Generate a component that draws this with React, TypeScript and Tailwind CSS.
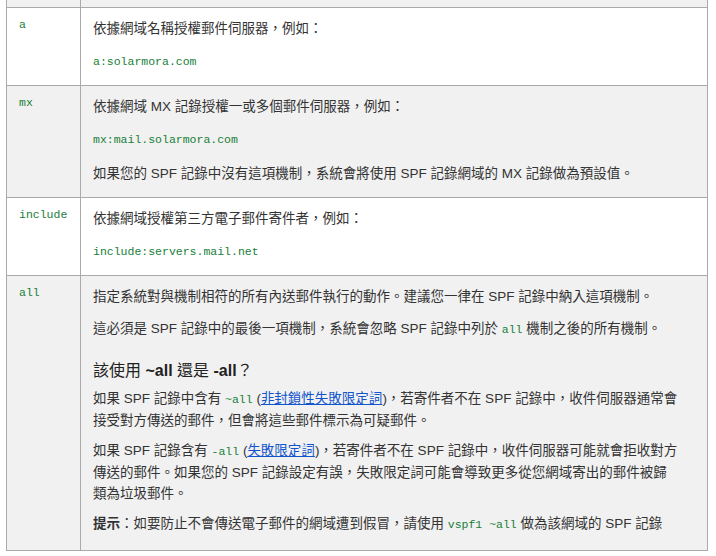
const body = { fontFamily: '"Liberation Sans", Arial, "Noto Sans CJK TC", sans-serif' };
const mono = { fontFamily: '"Liberation Mono", "Courier New", monospace' };

function Code({ children }: { children: React.ReactNode }) {
  return (
    <code style={mono} className="text-[11.5px] text-[#188038]">
      {children}
    </code>
  );
}

function Row({
  name,
  gray,
  children,
}: {
  name: string;
  gray?: boolean;
  children: React.ReactNode;
}) {
  return (
    <div className={`flex border-b border-[#aaa] ${gray ? "bg-[#f1f1f1]" : "bg-white"}`}>
      <div className="w-[74px] shrink-0 border-r border-[#aaa] pl-3 pt-[10px]">
        <span style={mono} className="block text-[11.5px] leading-[14px] text-[#188038]">
          {name}
        </span>
      </div>
      <div className="flex-1 pl-3 pr-3 pt-[10px] pb-[2px]">{children}</div>
    </div>
  );
}

function P({ children, mb = "mb-[11px]" }: { children: React.ReactNode; mb?: string }) {
  return <p className={`${mb} leading-[21px]`}>{children}</p>;
}

export default function App() {
  return (
    <div style={body} className="min-h-screen bg-white text-[13.5px] text-[#333]">
      <div className="ml-[6px] w-[702px] border-x border-[#aaa]">
        <div className="flex h-[8px] border-b border-[#aaa] bg-[#f1f1f1]">
          <div className="w-[74px] border-r border-[#aaa]" />
          <div className="flex-1" />
        </div>

        <Row name="a">
          <P>依據網域名稱授權郵件伺服器，例如：</P>
          <P>
            <Code>a:solarmora.com</Code>
          </P>
        </Row>

        <Row name="mx" gray>
          <P>依據網域 MX 記錄授權一或多個郵件伺服器，例如：</P>
          <P mb="mb-[13px]">
            <Code>mx:mail.solarmora.com</Code>
          </P>
          <P>如果您的 SPF 記錄中沒有這項機制，系統會將使用 SPF 記錄網域的 MX 記錄做為預設值。</P>
        </Row>

        <Row name="include">
          <P>依據網域授權第三方電子郵件寄件者，例如：</P>
          <P>
            <Code>include:servers.mail.net</Code>
          </P>
        </Row>

        <Row name="all" gray>
          <P>指定系統對與機制相符的所有內送郵件執行的動作。建議您一律在 SPF 記錄中納入這項機制。</P>
          <P>
            這必須是 SPF 記錄中的最後一項機制，系統會忽略 SPF 記錄中列於 <Code>all</Code> 機制之後的所有機制。
          </P>
          <h3 className="mt-[19px] mb-[5px] text-[16px] font-normal leading-[24px] text-[#222]">
            該使用 <b>~all</b> 還是 <b>-all</b>？
          </h3>
          <P mb="mb-[9px]">
            如果 SPF 記錄中含有 <Code>~all</Code> (
            <a href="#" className="text-[#1155cc] underline">
              非封鎖性失敗限定詞
            </a>
            )，若寄件者不在 SPF 記錄中，收件伺服器通常會
            <br />
            接受對方傳送的郵件，但會將這些郵件標示為可疑郵件。
          </P>
          <P mb="mb-[9px]">
            如果 SPF 記錄含有 <Code>-all</Code> (
            <a href="#" className="text-[#1155cc] underline">
              失敗限定詞
            </a>
            )，若寄件者不在 SPF 記錄中，收件伺服器可能就會拒收對方
            <br />
            傳送的郵件。如果您的 SPF 記錄設定有誤，失敗限定詞可能會導致更多從您網域寄出的郵件被歸
            <br />
            類為垃圾郵件。
          </P>
          <P mb="mb-[13px]">
            <b>提示</b>：如要防止不會傳送電子郵件的網域遭到假冒，請使用 <Code>vspf1 ~all</Code> 做為該網域的 SPF 記錄
          </P>
        </Row>
      </div>
    </div>
  );
}
